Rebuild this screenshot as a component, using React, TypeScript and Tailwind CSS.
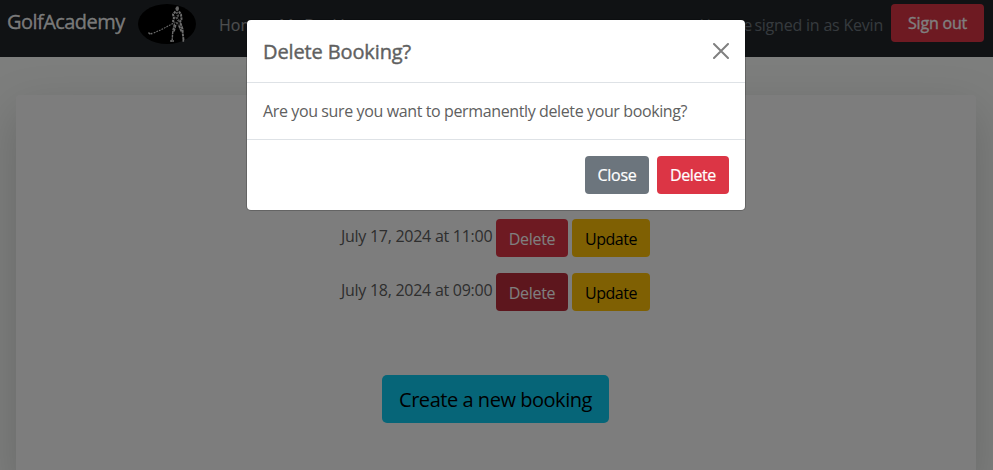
import React from "react";

function GolferLogo() {
  return (
    <svg className="h-10 w-[58px] shrink-0" viewBox="0 0 58 40">
      <ellipse cx="29" cy="20" rx="29" ry="20" fill="#000" />
      <g fill="none" stroke="#d8d8d8" strokeLinejoin="round">
        <path d="M37.300 4.200l1.500-2 1.700.3.500 2.500-1 2-2-.3z" fill="#c8c8c8" stroke="none" />
        <path d="M37.500 7.500l-2.500 3 1 3.500-1 3 2 2M41 7.500l2 3 .5 4.500-2 4" strokeWidth="2" strokeDasharray="2.500 .7" />
        <path d="M38.500 8l1.500 3.500-1.500 2 2 3-1.500 2.500 2 2" strokeWidth="2.400" stroke="#a0a0a0" strokeDasharray="2 1" />
        <path d="M36.500 20l-1.500 6-.5 5-.3 5M37.800 21l-1.800 7" strokeWidth="1.400" strokeDasharray="3 .6" />
        <path d="M42.500 19l2 6 .3 5 .8 6.500M41 21.500l2.500 6" strokeWidth="1.900" strokeDasharray="3 .6" />
        <path d="M32.300 37h3.500M44.500 36.800h2" strokeWidth="1.800" strokeDasharray="1.600 .4" />
        <path d="M35 19.500L22.500 26l-7 3" strokeWidth="1.100" strokeDasharray="1.800 1" />
        <path d="M10.500 28.500l1.200 1.400 3-.5" strokeWidth="1.400" strokeDasharray="2 .6" />
      </g>
    </svg>
  );
}

function Navbar() {
  return (
    <nav className="flex h-[57px] items-start bg-[#212529] pt-1 pr-[9px] pl-[7px]">
      <span className="mt-[3px] w-[131px] text-[20px] leading-[30px] tracking-[-0.55px] text-white/95 [-webkit-text-stroke:0.3px]">GolfAcademy</span>
      <GolferLogo />
      <div className="mt-[9px] ml-[23px] flex gap-4 leading-6 text-white/55">
        <span className="w-[44px]">Home</span>
        <span className="tracking-[-0.45px]">My Bookings</span>
      </div>
      <div className="ml-auto flex items-start gap-2">
        <span className="mt-[9px] leading-6 tracking-[-0.21px] text-[#6c757d]"><span className="tracking-[-0.95px]">You are </span>signed in as Kevin</span>
        <button className="h-[38px] w-[93px] rounded bg-[#dc3545] tracking-[-0.2px] text-white [-webkit-text-stroke:0.3px]">Sign out</button>
      </div>
    </nav>
  );
}

function BookingRow({ date, pressed = false }: { date: string; pressed?: boolean }) {
  return (
    <li className="flex h-[38px] gap-1">
      <span className="mt-[5px] w-[151px] leading-6 tracking-[-0.27px] text-[#5d5d5d]">{date}</span>
      <button className={`w-[72px] rounded pt-px tracking-[-0.3px] text-white ${pressed ? "bg-[#bb2d3b]" : "bg-[#dc3545]"}`}>Delete</button>
      <button className="w-[78px] rounded bg-[#ffc107] pt-px tracking-[-0.5px] text-black">Update</button>
    </li>
  );
}

function DeleteDialog() {
  return (
    <div className="absolute inset-0 flex items-start justify-center bg-black/50 pt-5 pr-px">
      <section role="dialog" className="w-[498px] rounded-[4px] bg-white text-[#606060] shadow-[0_0_0_1px_rgba(0,0,0,0.2)]">
        <header className="flex h-[63px] items-center justify-between border-b border-[#dee2e6] px-4">
          <h5 className="pt-0.5 text-[20px] leading-[30px] tracking-[-0.12px] [-webkit-text-stroke:0.4px]">Delete Booking?</h5>
          <svg className="h-4 w-4" viewBox="0 0 16 16" stroke="#808080" strokeWidth="2" strokeLinecap="round">
            <path d="M1 1l14 14M15 1L1 15" />
          </svg>
        </header>
        <p className="h-14 px-4 pt-4 leading-6 tracking-[-0.38px]">Are you sure you want to permanently delete your booking?</p>
        <footer className="flex h-[71px] items-center justify-end gap-2 border-t border-[#dee2e6] px-4">
          <button className="h-[38px] w-16 rounded bg-[#6c757d] tracking-[-0.3px] text-white [-webkit-text-stroke:0.2px]">Close</button>
          <button className="h-[38px] w-[72px] rounded bg-[#dc3545] tracking-[-0.4px] text-white [-webkit-text-stroke:0.2px]">Delete</button>
        </footer>
      </section>
    </div>
  );
}

export default function App() {
  return (
    <div className="relative h-[470px] w-[993px] overflow-hidden bg-[#fafcfa] font-['Open_Sans','Noto_Sans',sans-serif] text-base whitespace-nowrap">
      <Navbar />
      <main className="mt-[38px] ml-4 h-[385px] w-[960px] rounded bg-[#fbfbfb] shadow-[0_16px_48px_rgba(0,0,0,0.175)]">
        <div className="flex flex-col items-center pt-[124px] pr-px">
          <ul className="flex flex-col gap-4">
            <BookingRow date="July 17, 2024 at 11:00" />
            <BookingRow date="July 18, 2024 at 09:00" pressed />
          </ul>
          <button className="mt-16 h-12 w-[227px] rounded-[5px] bg-[#0dcaf0] pt-0.5 text-[20px] tracking-[-0.46px] text-black">Create a new booking</button>
        </div>
      </main>
      <DeleteDialog />
    </div>
  );
}
